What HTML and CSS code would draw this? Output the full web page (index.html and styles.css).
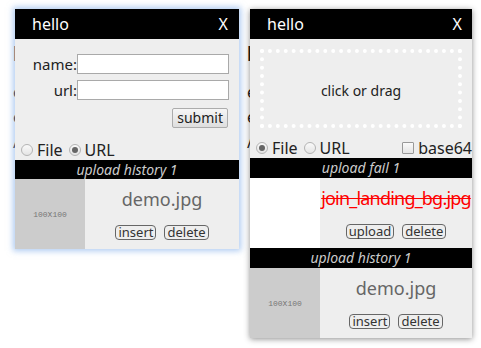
FILE: index.html
```html
<!DOCTYPE html>
<html lang="en">
<head>
    <meta charset="UTF-8">
    <title>Uploader</title>
    <link rel="stylesheet" href="styles.css">
</head>
<body>
    <div class="page page-left">
        <div class="page-title">l</div>
        <div class="page-line">e</div>
        <div class="page-line">e</div>
        <div class="page-line">/</div>
    </div>
    <div class="page page-right">
        <div class="page-title">l</div>
        <div class="page-line">e</div>
        <div class="page-line">e</div>
        <div class="page-line">/</div>
    </div>

    <div class="dialog dialog-url">
        <div class="head">
            <span>hello</span>
            <span class="close">X</span>
        </div>
        <div class="form">
            <label for="name">name:</label>
            <input id="name" type="text">
            <label for="url">url:</label>
            <input id="url" type="text">
            <div class="actions">
                <button class="submit">submit</button>
            </div>
        </div>
        <div class="mode">
            <label><input type="radio" name="mode1"> File</label>
            <label><input type="radio" name="mode1" checked> URL</label>
        </div>
        <div class="bar">upload history 1</div>
        <div class="item">
            <div class="thumb">100X100</div>
            <div class="info">
                <div class="name">demo.jpg</div>
                <div class="btns">
                    <button class="small">insert</button>
                    <button class="small">delete</button>
                </div>
            </div>
        </div>
    </div>

    <div class="dialog dialog-file">
        <div class="head">
            <span>hello</span>
            <span class="close">X</span>
        </div>
        <div class="drop">click or drag</div>
        <div class="mode">
            <label><input type="radio" name="mode2" checked> File</label>
            <label><input type="radio" name="mode2"> URL</label>
            <label class="b64"><input type="checkbox"> base64</label>
        </div>
        <div class="bar">upload fail 1</div>
        <div class="item">
            <div class="thumb blank"></div>
            <div class="info">
                <div class="name failed">join_landing_bg.jpg</div>
                <div class="btns">
                    <button class="small">upload</button>
                    <button class="small">delete</button>
                </div>
            </div>
        </div>
        <div class="bar">upload history 1</div>
        <div class="item">
            <div class="thumb">100X100</div>
            <div class="info">
                <div class="name">demo.jpg</div>
                <div class="btns">
                    <button class="small">insert</button>
                    <button class="small">delete</button>
                </div>
            </div>
        </div>
    </div>
</body>
</html>
```

FILE: styles.css
```css
body {
    margin: 0;
    background: #fff;
    font-family: "Noto Sans", sans-serif;
    color: #222;
}
.page {
    position: absolute;
    top: 42px;
    font-size: 16px;
    color: #222;
}
.page-left {
    left: 13px;
}
.page-right {
    left: 247px;
}
.page-title {
    font-weight: bold;
    font-size: 20px;
    line-height: 24px;
    margin-bottom: 14px;
}
.page-line {
    line-height: 25px;
}
.dialog {
    position: absolute;
    top: 9px;
    background: #eee;
}
.dialog-url {
    left: 15px;
    width: 224px;
    box-shadow: 0 0 6px 2px rgba(110, 160, 230, 0.55);
}
.dialog-file {
    left: 250px;
    width: 222px;
    box-shadow: 0 1px 6px rgba(0, 0, 0, 0.45);
}
.head {
    height: 30px;
    background: #000;
    color: #fff;
    font-size: 16px;
    display: flex;
    justify-content: space-between;
    align-items: center;
    padding: 0 11px 0 17px;
}
.dialog-file .head {
    padding-right: 10px;
}
.form {
    display: grid;
    grid-template-columns: 1fr 152px;
    row-gap: 6px;
    align-items: center;
    align-content: start;
    padding: 15px 10px 0 10px;
}
.form label {
    text-align: right;
    font-size: 15px;
    line-height: 20px;
}
.form input {
    box-sizing: border-box;
    height: 20px;
    border: 1px solid #a9a9a9;
    background: #fff;
    margin: 0;
}
.actions {
    grid-column: 1 / 3;
    display: flex;
    justify-content: flex-end;
    padding-right: 1px;
    margin-top: 2px;
}
.submit {
    height: 20px;
    padding: 0 4px;
    font-family: "Noto Sans", sans-serif;
    font-size: 14px;
    line-height: 18px;
    color: #222;
    background: linear-gradient(#f6f6f6, #dedede);
    border: 1px solid #acacac;
    border-radius: 2px;
}
.mode {
    display: flex;
    align-items: center;
    height: 20px;
    padding-left: 6px;
    font-size: 16px;
    line-height: 20px;
}
.dialog-url .mode {
    margin-top: 12px;
}
.dialog-file .mode {
    margin-top: 10px;
}
.mode label {
    display: flex;
    align-items: center;
    gap: 4px;
    margin-right: 6px;
}
.mode .b64 {
    margin-left: auto;
    margin-right: 0;
}
.mode input {
    appearance: none;
    margin: 0;
    width: 12px;
    height: 12px;
    box-sizing: border-box;
    border: 1px solid #b4b4b4;
    background: linear-gradient(#fafafa, #e4e4e4);
    position: relative;
}
.mode input[type=radio] {
    border-radius: 50%;
}
.mode input[type=radio]:checked::after {
    content: "";
    position: absolute;
    left: 2px;
    top: 2px;
    width: 6px;
    height: 6px;
    border-radius: 50%;
    background: #666;
}
.mode input[type=checkbox] {
    width: 12px;
    height: 12px;
    border-color: #999;
    border-radius: 1px;
}
.bar {
    height: 19px;
    line-height: 19px;
    background: #000;
    color: #ccc;
    font-size: 14px;
    font-style: italic;
    text-align: center;
}
.dialog-file .bar {
    height: 20px;
    line-height: 20px;
}
.item {
    display: flex;
    height: 70px;
}
.thumb {
    width: 70px;
    flex: none;
    background: #ccc;
    display: flex;
    align-items: center;
    justify-content: center;
    font-family: "Liberation Mono", monospace;
    font-size: 8px;
    color: #777;
}
.thumb.blank {
    background: #fff;
}
.info {
    flex: 1;
    text-align: center;
    padding-top: 8px;
    overflow: hidden;
}
.name {
    font-size: 18px;
    line-height: 24px;
    color: #666;
    white-space: nowrap;
}
.name.failed {
    color: #f00;
    text-decoration: line-through;
    letter-spacing: -0.8px;
}
.btns {
    display: flex;
    justify-content: center;
    gap: 8px;
    margin-top: 14px;
}
.small {
    font-family: "Noto Sans", sans-serif;
    font-size: 13px;
    line-height: 13px;
    padding: 0 2px;
    color: #333;
    background: transparent;
    border: 1px solid #666;
    border-radius: 4px;
}
.drop {
    margin: 10px 10px 0 10px;
    height: 79px;
    box-sizing: border-box;
    border: 4px dotted #fff;
    padding-top: 4px;
    display: flex;
    align-items: center;
    justify-content: center;
    font-size: 14px;
    color: #222;
}
```
